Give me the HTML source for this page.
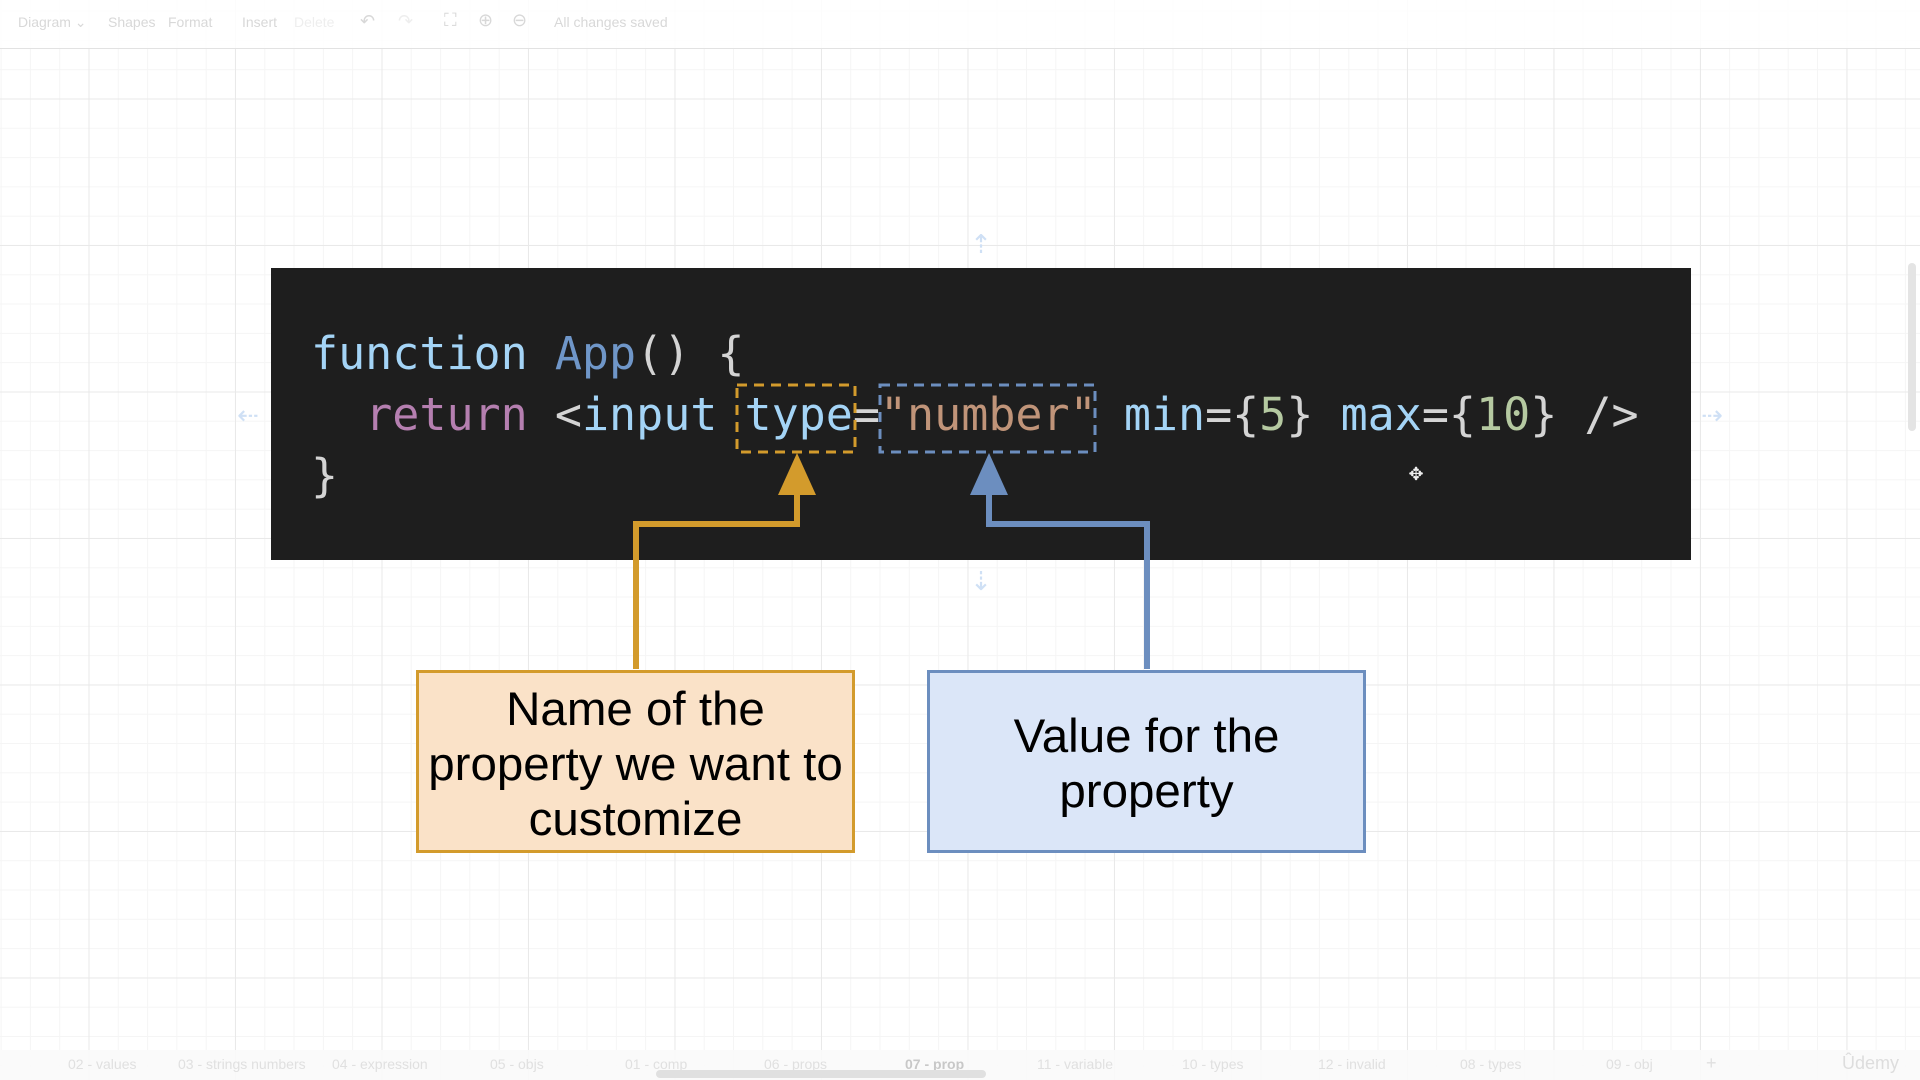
<!DOCTYPE html>
<html><head><meta charset="utf-8"><style>
html,body{margin:0;padding:0;width:1920px;height:1080px;overflow:hidden;background:#fff;font-family:"Liberation Sans",sans-serif;}
.grid{position:absolute;left:0;top:0;width:1920px;height:1080px;
background-image:
linear-gradient(#e9e9e9 1px,transparent 1px),linear-gradient(90deg,#e9e9e9 1px,transparent 1px),
linear-gradient(#f5f5f5 1px,transparent 1px),linear-gradient(90deg,#f5f5f5 1px,transparent 1px);
background-size:146.5px 146.5px,146.5px 146.5px,29.3px 29.3px,29.3px 29.3px;
background-position:-58px -48px,-58px -48px,-58px -48px,-58px -48px;}
.tb{position:absolute;top:0;left:0;width:1920px;height:48px;border-bottom:1px solid #e2e2e2;background:rgba(255,255,255,.85);}
.tb span{position:absolute;top:14px;font-size:14px;color:#d8d8d8;}
.code{position:absolute;left:271px;top:268px;width:1420px;height:292px;background:#1e1e1e;}
.k{color:#a4d4f6}.f{color:#6f96c8}.r{color:#b57fb0}.s{color:#c09479}.n{color:#b5c9a1}
.box{position:absolute;display:flex;align-items:center;justify-content:center;text-align:center;font-size:47.5px;line-height:55px;color:#000;box-sizing:border-box;padding-top:5px;}
.bot{position:absolute;left:0;top:1050px;width:1920px;height:30px;background:rgba(250,250,250,.9);}
.bot span{position:absolute;top:6px;font-size:14px;color:#e0e0e0;}
</style></head><body>
<div class="grid"></div>
<div class="tb">
<span style="left:18px">Diagram ⌄</span><span style="left:108px">Shapes</span><span style="left:168px">Format</span><span style="left:242px">Insert</span><span style="left:294px;color:#eee">Delete</span><span style="left:360px;font-size:18px;top:11px">↶</span><span style="left:398px;font-size:18px;top:11px;color:#eee">↷</span><span style="left:444px;font-size:18px;top:10px">⛶</span><span style="left:478px;font-size:18px;top:10px">⊕</span><span style="left:512px;font-size:18px;top:10px">⊖</span><span style="left:554px">All changes saved</span>
</div>
<div class="code"></div>
<pre style="margin:0;position:absolute;left:311px;top:323px;font-family:'DejaVu Sans Mono','Liberation Mono',monospace;font-size:45px;line-height:61px;color:#d4d4d4;"><span class="k">function</span> <span class="f">App</span>() {
  <span class="r">return</span> &lt;<span class="k">input</span> <span class="k">type</span>=<span class="s">"number"</span> <span class="k">min</span>={<span class="n">5</span>} <span class="k">max</span>={<span class="n">10</span>} /&gt;
}</pre>
<svg style="position:absolute;left:0;top:0" width="1920" height="1080">
<rect x="737" y="385" width="118" height="67" fill="none" stroke="#d39b2c" stroke-width="3" stroke-dasharray="10 7"/>
<rect x="880" y="385" width="215" height="67" fill="none" stroke="#6c8ebf" stroke-width="3" stroke-dasharray="10 7"/>
<polyline points="636,669 636,524 797,524 797,490" fill="none" stroke="#d39b2c" stroke-width="6"/>
<polygon points="797,453 778,495 816,495" fill="#d39b2c"/>
<polyline points="1147,669 1147,524 989,524 989,490" fill="none" stroke="#6c8ebf" stroke-width="6"/>
<polygon points="989,453 970,495 1008,495" fill="#6c8ebf"/>
<text x="981" y="253" fill="#cfe0f5" font-size="26" text-anchor="middle">⇡</text>
<text x="981" y="590" fill="#cfe0f5" font-size="26" text-anchor="middle">⇣</text>
<text x="248" y="424" fill="#cfe0f5" font-size="26" text-anchor="middle">⇠</text>
<text x="1712" y="424" fill="#cfe0f5" font-size="26" text-anchor="middle">⇢</text>
<text x="1416" y="480" fill="#eee" font-size="18" text-anchor="middle">✥</text>
<rect x="1908" y="263" width="8" height="168" rx="4" fill="#e4e4e4"/>
</svg>
<div class="box" style="left:416px;top:670px;width:439px;height:183px;background:#fae2c8;border:3.5px solid #d39b2c;">Name of the<br>property we want to<br>customize</div>
<div class="box" style="left:927px;top:670px;width:439px;height:183px;background:#dbe6f8;border:3.5px solid #6c8ebf;">Value for the<br>property</div>
<div class="bot">
<span style="left:68px">02 - values</span><span style="left:178px">03 - strings numbers</span><span style="left:332px">04 - expression</span><span style="left:490px">05 - objs</span><span style="left:625px">01 - comp</span><span style="left:764px">06 - props</span><span style="left:905px;color:#c8c8c8;font-weight:bold">07 - prop</span><span style="left:1037px">11 - variable</span><span style="left:1182px">10 - types</span><span style="left:1318px">12 - invalid</span><span style="left:1460px">08 - types</span><span style="left:1606px">09 - obj</span><span style="left:1706px;font-size:18px;top:3px">+</span><span style="left:1842px;font-size:18px;top:3px;color:#ddd">Ûdemy</span>
<div style="position:absolute;left:656px;top:20px;width:330px;height:8px;border-radius:4px;background:#e0e0e0"></div>
</div>
</body></html>
